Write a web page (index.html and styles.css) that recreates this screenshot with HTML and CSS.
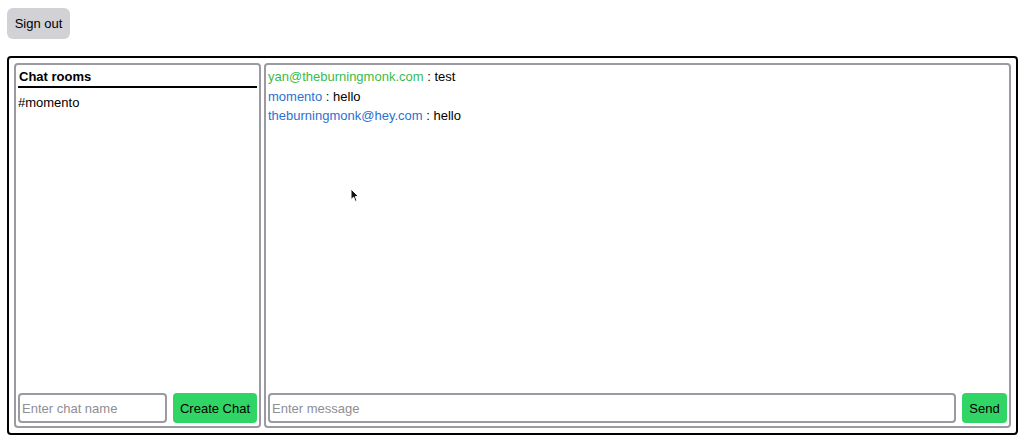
FILE: index.html
```html
<!DOCTYPE html>
<html>
<head>
<meta charset="utf-8">
<link rel="stylesheet" href="styles.css">
</head>
<body>
<button class="signout">Sign out</button>
<div class="app">
  <div class="panel rooms">
    <div class="rooms-title">Chat rooms</div>
    <div class="room">#momento</div>
    <div class="composer">
      <input class="field chat-name" placeholder="Enter chat name">
      <button class="go">Create Chat</button>
    </div>
  </div>
  <div class="panel messages">
    <div class="msg"><span class="who green">yan@theburningmonk.com</span> : test</div>
    <div class="msg"><span class="who blue">momento</span> : hello</div>
    <div class="msg"><span class="who blue">theburningmonk@hey.com</span> : hello</div>
    <div class="composer">
      <input class="field msg-field" placeholder="Enter message">
      <button class="go">Send</button>
    </div>
  </div>
</div>
<svg class="cursor" width="10" height="15" viewBox="0 0 10 15"><path d="M1 1 L1 11.5 L3.6 9.2 L5.4 13.4 L7 12.7 L5.3 8.6 L8.6 8.6 Z" fill="#111" stroke="#fff" stroke-width="1"/></svg>
</body>
</html>
```
FILE: styles.css
```css
html, body { background: #fff; }
body {
  margin: 8px 6px 0 7px;
  font-family: "Liberation Sans", Arial, sans-serif;
  font-size: 13px;
  color: #000;
  position: relative;
}
.signout {
  display: block;
  width: 63px;
  height: 31px;
  border: none;
  border-radius: 6px;
  background: #d1d1d6;
  font-family: inherit;
  font-size: 13px;
  color: #000;
  padding: 0;
  margin: 0 0 17px 0;
}
.app {
  height: 379px;
  box-sizing: border-box;
  border: 2px solid #000;
  border-radius: 4px;
  padding: 5px;
  display: flex;
  gap: 3px;
}
.panel {
  box-sizing: border-box;
  border: 2px solid #9a9aa0;
  border-radius: 4px;
  padding: 2px 2px 3px 2px;
  display: flex;
  flex-direction: column;
}
.rooms { width: 247px; }
.messages { flex: 1; }
.rooms-title {
  font-weight: bold;
  line-height: 19px;
  border-bottom: 2px solid #000;
  padding-left: 1px;
}
.room {
  margin-top: 5px;
  line-height: 19.5px;
}
.msg { line-height: 19.5px; }
.green { color: #3bbb4c; }
.blue { color: #2d6fd2; }
.composer {
  margin-top: auto;
  display: flex;
  gap: 6px;
  height: 30px;
}
.field {
  box-sizing: border-box;
  height: 30px;
  border: 2px solid #9a9aa0;
  border-radius: 4px;
  padding: 0 2px;
  font-family: inherit;
  font-size: 13px;
  outline: none;
}
.field::placeholder { color: #8e8e93; }
.chat-name { width: 149px; }
.msg-field { flex: 1; }
.go {
  box-sizing: border-box;
  height: 30px;
  border: none;
  border-radius: 4px;
  background: #30d566;
  font-family: inherit;
  font-size: 13px;
  color: #000;
  padding: 0;
  white-space: nowrap;
  flex: none;
}
.rooms .go { width: 84px; }
.messages .go { width: 45px; }
.cursor {
  position: absolute;
  left: 343px;
  top: 180px;
}
```
